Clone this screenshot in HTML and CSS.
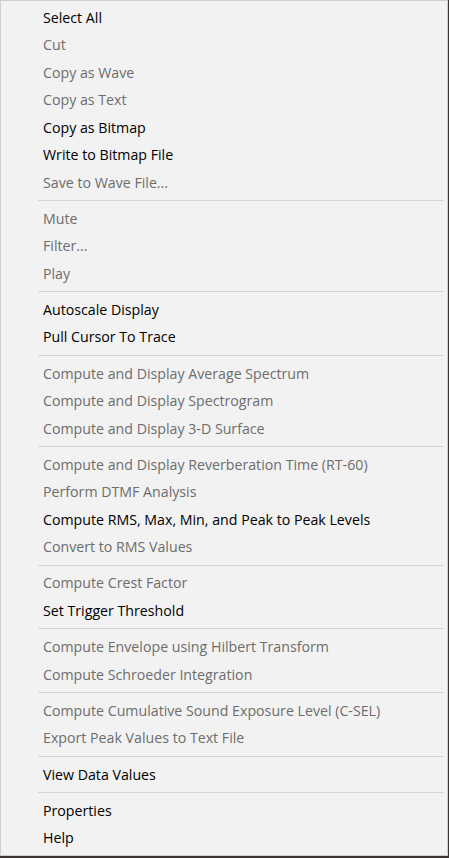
FILE: index.html
```html
<!DOCTYPE html>
<html lang="en">
<head>
    <meta charset="UTF-8">
    <meta name="viewport" content="width=device-width, initial-scale=1.0">
    <title>Context menu</title>
    <link rel="stylesheet" href="styles.css">
</head>
<body>
    <div class="menu">
        <div class="item">Select All</div>
        <div class="item off">Cut</div>
        <div class="item off">Copy as Wave</div>
        <div class="item off">Copy as Text</div>
        <div class="item">Copy as Bitmap</div>
        <div class="item">Write to Bitmap File</div>
        <div class="item off">Save to Wave File...</div>
        <div class="sep"></div>
        <div class="item off">Mute</div>
        <div class="item off">Filter...</div>
        <div class="item off">Play</div>
        <div class="sep"></div>
        <div class="item">Autoscale Display</div>
        <div class="item">Pull Cursor To Trace</div>
        <div class="sep"></div>
        <div class="item off">Compute and Display Average Spectrum</div>
        <div class="item off">Compute and Display Spectrogram</div>
        <div class="item off">Compute and Display 3-D Surface</div>
        <div class="sep"></div>
        <div class="item off">Compute and Display Reverberation Time (RT-60)</div>
        <div class="item off">Perform DTMF Analysis</div>
        <div class="item">Compute RMS, Max, Min, and Peak to Peak Levels</div>
        <div class="item off">Convert to RMS Values</div>
        <div class="sep"></div>
        <div class="item off">Compute Crest Factor</div>
        <div class="item">Set Trigger Threshold</div>
        <div class="sep"></div>
        <div class="item off">Compute Envelope using Hilbert Transform</div>
        <div class="item off">Compute Schroeder Integration</div>
        <div class="sep"></div>
        <div class="item off">Compute Cumulative Sound Exposure Level (C-SEL)</div>
        <div class="item off">Export Peak Values to Text File</div>
        <div class="sep"></div>
        <div class="item">View Data Values</div>
        <div class="sep"></div>
        <div class="item">Properties</div>
        <div class="item">Help</div>
    </div>
</body>
</html>
```

FILE: styles.css
```css
body{
    margin: 0;
    background-color: #3b3430;
    font-family: "Open Sans", "Noto Sans", sans-serif;
}

.menu{
    width: 448px;
    height: 856px;
    box-sizing: border-box;
    background-color: #f2f2f2;
    border: 1px solid #cfcfcf;
    padding: 2.5px 3px 3px 0;
}

.item{
    height: 27.5px;
    line-height: 27.5px;
    padding-left: 42px;
    font-size: 14.2px;
    color: #000;
    white-space: nowrap;
}

.item.off{
    color: #6d6d6d;
}

.sep{
    height: 1px;
    margin: 4px 0 3.7px 37px;
    background-color: #d5d5d5;
}
```
